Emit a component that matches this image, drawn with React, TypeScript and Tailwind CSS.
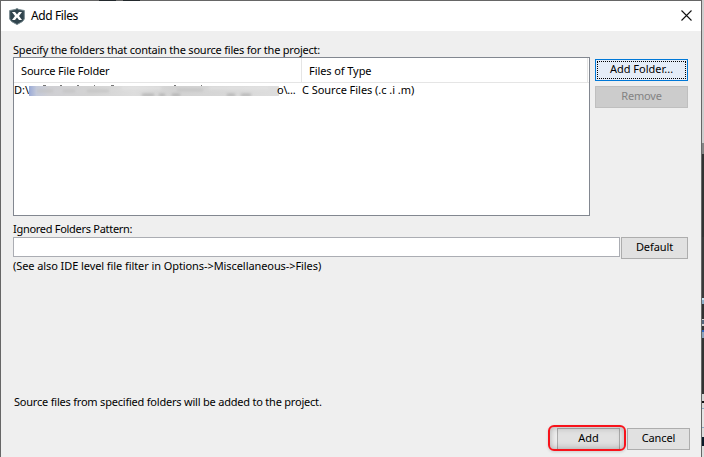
import type { ReactNode } from "react";

function Button({ className, children }: { className: string; children: ReactNode }) {
  return (
    <button className={`flex h-[22px] shrink-0 items-center justify-center border pb-[2px] ${className}`}>
      {children}
    </button>
  );
}

function Logo() {
  return (
    <svg width="16" height="17" viewBox="0 0 16 17" className="shrink-0">
      <path d="M8 .5 10 1.6 15.3 2.5V11L13.5 13.5 8 16.5 2.500 13.500.7 11V2.500L6 1.600Z" fill="#30444d" stroke="#74868c" strokeWidth="1" />
      <path d="M3 4H6L8 6.500 10 4H13L10 8 13 12H10L8 9.500 6 12H3L6 8Z" fill="#fff" />
    </svg>
  );
}

/* Blurred-out part of the folder path */
function RedactedPath() {
  return (
    <svg width="250" height="12" viewBox="0 0 250 12" className="shrink-0">
      <defs>
        <linearGradient id="haze">
          <stop offset="0" stopColor="#9aaad6" />
          <stop offset=".03" stopColor="#c3c9da" />
          <stop offset=".08" stopColor="#cfcfd3" />
          <stop offset=".25" stopColor="#d3d3d3" />
          <stop offset=".42" stopColor="#dddddd" />
          <stop offset=".58" stopColor="#d2d2d2" />
          <stop offset=".75" stopColor="#d6d6d6" />
          <stop offset="1" stopColor="#dedede" />
        </linearGradient>
        <filter id="soft" x="-5%" y="-50%" width="110%" height="200%"><feGaussianBlur stdDeviation="1.800" /></filter>
        <clipPath id="band"><rect y="1" width="250" height="10" /></clipPath>
      </defs>
      <path d="M14 .5h3M31 .5h2M48 .5h2M65 .5h1M82 .5h3M145 .5h2M172 .5h1" stroke="#777" />
      <rect y="1" width="250" height="10" fill="url(#haze)" />
      <g clipPath="url(#band)">
        <g filter="url(#soft)" stroke="#a6a6a6" strokeWidth="2">
          <path d="M113 10h12M130 10h6M143 10h8M198 10h8M212 10h10" />
          <path d="M8 6h16M34 6h12M58 6h22M148 5h26" stroke="#c0c0c0" />
          <path d="M92 3h40M180 3h60" stroke="#e6e6e6" />
        </g>
      </g>
    </svg>
  );
}

/* Slice of the editor window visible behind the dialog */
const edge = [
  ["h-[143px]", "bg-[#cecece]"],
  ["h-[11px]", "bg-[#858585]"],
  ["h-[83px]", "bg-[#323333]"],
  ["h-[61px]", "bg-[#393a3a]"],
  ["h-[2px]", "bg-[#c9e5f2]"],
  ["h-[4px]", "bg-[#8daec8]"],
  ["h-[15px]", "bg-[#303131]"],
  ["h-[1px]", "bg-[#d5d5d5]"],
  ["h-[4px]", "bg-[#53657c]"],
  ["h-[2px]", "bg-[#d0d0d0]"],
  ["h-[4px]", "bg-[#343434]"],
  ["h-[2px]", "bg-[#2c63bd]"],
  ["h-[6px]", "bg-[#8ba3bb]"],
  ["h-[56px]", "bg-[#323333]"],
  ["h-[7px]", "bg-[#d6d6d6]"],
  ["h-[2px]", "bg-[#111111]"],
  ["h-[5px]", "bg-[#d9d9d9]"],
  ["h-[1px]", "bg-[#8eaac4]"],
  ["h-[18px]", "bg-[#e5e5e5]"],
  ["h-[1px]", "bg-[#8eaac4]"],
  ["h-[9px]", "bg-[#dcdcdc]"],
  ["h-[9px]", "bg-[#0a1a28]"],
  ["h-[11px]", "bg-[#dedede]"],
];

export default function App() {
  return (
    <div className="flex h-[457px] w-[704px] overflow-hidden bg-[#333] font-['Noto_Sans',sans-serif] text-[11px] leading-[14px] whitespace-nowrap text-black">
      <div className="flex w-[702px] shrink-0 flex-col border-x border-[#666] bg-[#efefef]">
        <div className="flex h-px shrink-0 bg-[#666]">
          <div className="ml-[98px] w-[17px] bg-[#22282c]" />
          <div className="ml-[7px] w-[17px] bg-[#22282c]" />
        </div>
        <header className="flex h-[30px] shrink-0 items-center bg-white pl-2">
          <Logo />
          <h1 className="ml-[6px] text-[12px] tracking-[-0.4px]">Add Files</h1>
          <svg width="11" height="11" viewBox="0 0 11 11" className="mr-[9px] mb-px ml-auto" fill="none" stroke="#111" strokeWidth="1.1">
            <path d="M.5.5l10 10M10.500.5l-10 10" />
          </svg>
        </header>
        <main className="flex flex-1 flex-col pt-[12px] pl-[12px]">
          <p className="tracking-[-0.21px]">Specify the folders that contain the source files for the project:</p>
          <div className="flex gap-[5px]">
            <div className="h-[159px] w-[577px] border border-[#828790] bg-white">
              <div className="flex h-[25px] w-[575px] items-center border-b border-[#e5e5e5]">
                <div className="flex h-full w-[288px] items-center border-r border-[#e5e5e5] pt-[2px] pl-[7px]"><span className="tracking-[-0.16px]">Source File Folder</span></div>
                <div className="flex h-full w-[286px] items-center border-r border-[#e5e5e5] pt-[2px] pl-[7px]"><span className="tracking-[-0.08px]">Files of Type</span></div>
              </div>
              <div className="flex h-[14px] items-center">
                <span className="w-[15px]">D:\</span>
                <div className="pt-[2px]"><RedactedPath /></div>
                <span className="-ml-[2px] w-[19px] tracking-[-0.2px]">o\...</span>
                <span className="ml-[6px] tracking-[-0.04px]">C Source Files (.c .i .m)</span>
              </div>
            </div>
            <div className="flex flex-col gap-[5px] pt-[2px]">
              <button className="flex h-[22px] w-[93px] border border-[#0078d7] bg-[#e5edf7] p-px">
                <span className="flex h-full w-full items-center justify-center border border-dotted border-black pb-[2px]">Add Folder...</span>
              </button>
              <Button className="w-[93px] border-[#bfbfbf] bg-[#cccccc] tracking-[-0.2px] text-[#838383]">Remove</Button>
            </div>
          </div>
          <p className="mt-[6px] tracking-[-0.29px]">Ignored Folders Pattern:</p>
          <div className="mt-px flex gap-px">
            <div className="h-[20px] w-[607px] border border-[#abadb3] bg-white" />
            <Button className="w-[67px] border-[#adadad] bg-[#e1e1e1] tracking-[-0.1px]">Default</Button>
          </div>
          <p className="tracking-[-0.08px]">(See also IDE level file filter in Options-&gt;Miscellaneous-&gt;Files)</p>
          <p className="mt-[122px] ml-px tracking-[-0.21px]">Source files from specified folders will be added to the project.</p>
          <footer className="mt-[19px] mr-[11px] flex justify-end gap-[7px]">
            <div className="relative">
              <Button className="w-[63px] border-[#adadad] bg-[#e1e1e1]">Add</Button>
              <div className="absolute -top-[3px] -left-[9px] h-[26px] w-[78px] rounded-[6px] border-2 border-[#f8131b] shadow-[inset_0_0_7px_rgba(0,0,0,0.3),0_1px_3px_rgba(0,0,0,0.15)]" />
            </div>
            <Button className="w-[63px] border-[#adadad] bg-[#e1e1e1] tracking-[-0.1px]">Cancel</Button>
          </footer>
        </main>
      </div>
      <div className="flex w-[2px] flex-col">
        {edge.map(([height, color], i) => <div key={i} className={`shrink-0 ${height} ${color}`} />)}
      </div>
    </div>
  );
}
